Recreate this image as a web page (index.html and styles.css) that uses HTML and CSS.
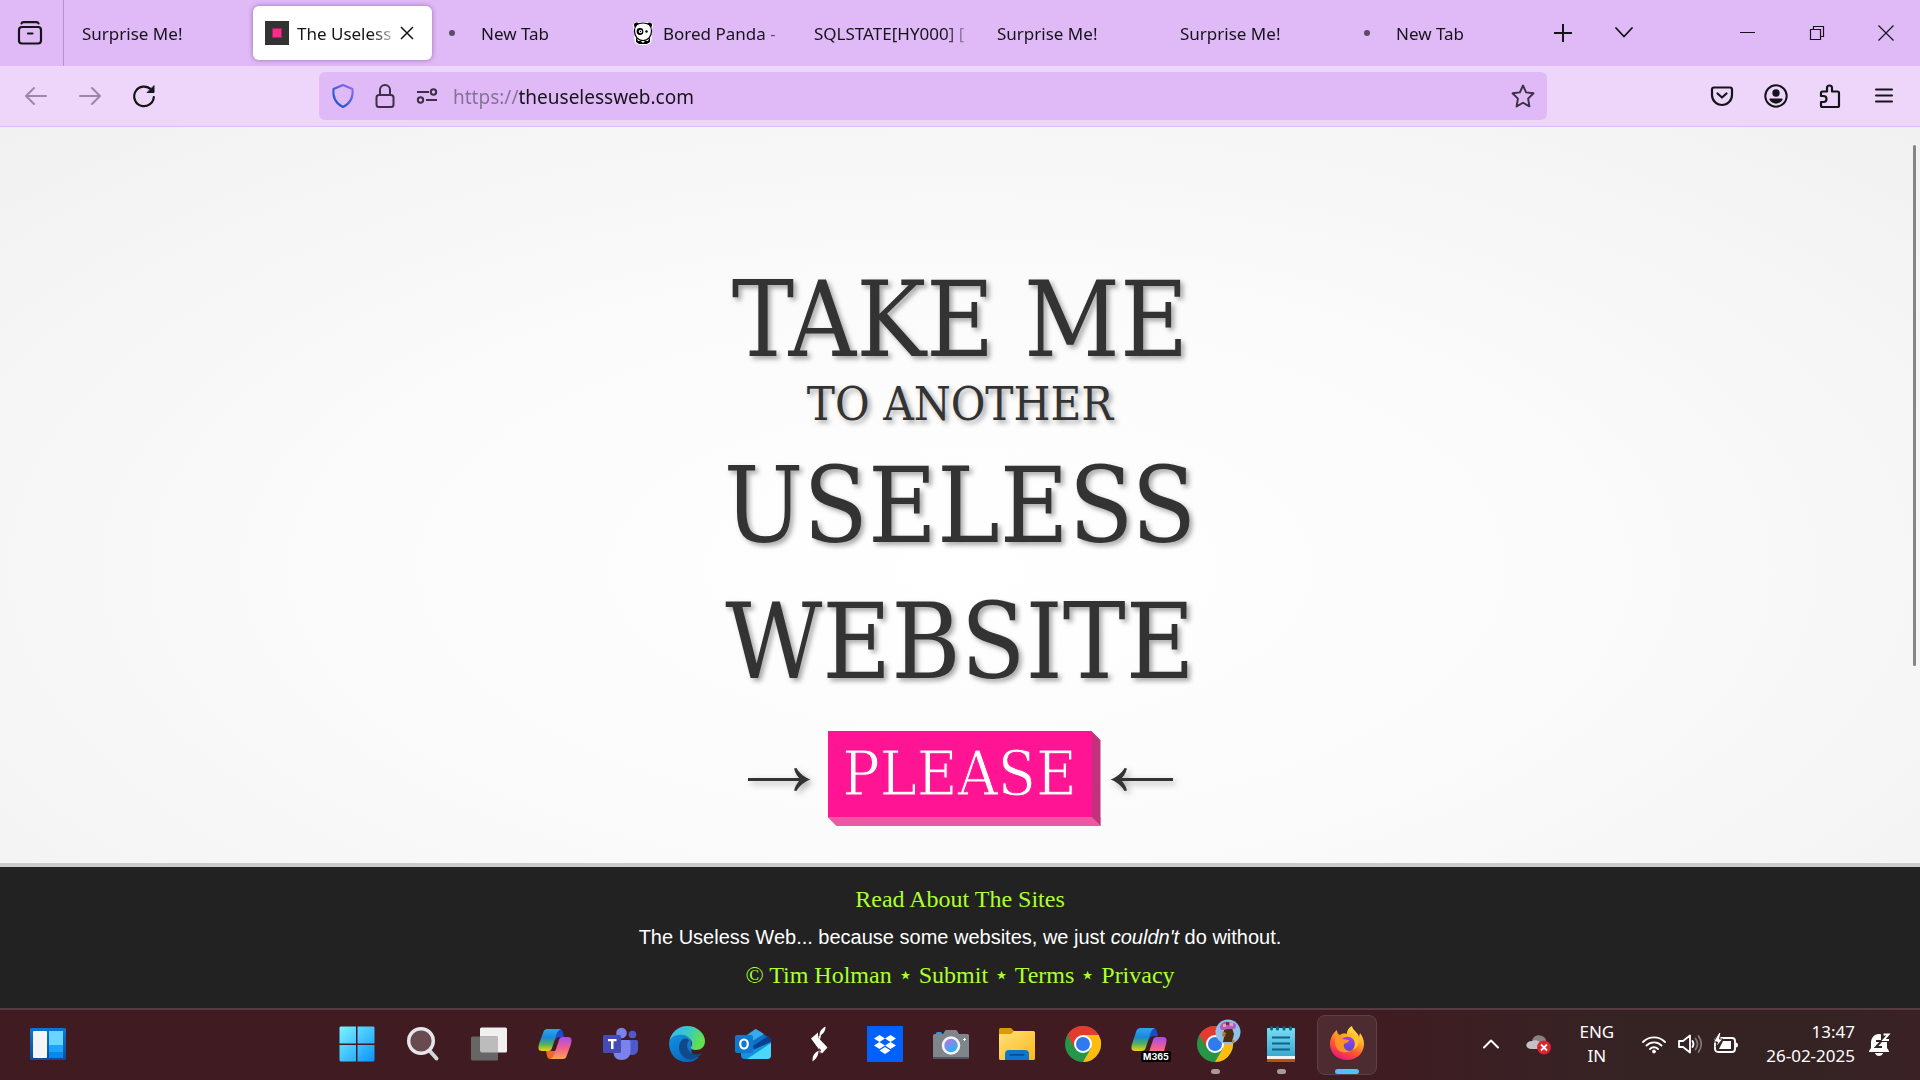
FILE: index.html
```html
<!DOCTYPE html>
<html lang="en">
<head>
<meta charset="utf-8">
<title>The Useless Web</title>
<link rel="stylesheet" href="styles.css">
</head>
<body>
<header class="browser">
  <div class="tabbar">
    <button class="view-btn" aria-label="Recent browsing"><svg width="26" height="26" viewBox="0 0 26 26" fill="none" stroke="#15141a" stroke-width="2.2" stroke-linecap="round"><path d="M4.500 3.500q.4-1.400 2-1.400h13q1.600 0 2 1.400"/><rect x="2" y="7" width="22" height="16.500" rx="3"/><path d="M11 13.500h4.500"/></svg></button>
    <div class="tabs">
      <button class="tab"><span class="tab-label">Surprise Me!</span></button>
      <button class="tab active"><svg class="favicon" width="24" height="24" viewBox="0 0 24 24"><path fill="#333" d="M0 0h24v24H0z"/><path fill="#ff2a8a" stroke="#a3225f" d="M7.500 7.500h9v9h-9z"/></svg><span class="tab-label">The Useless</span><svg class="tab-close" width="14" height="14" viewBox="0 0 14 14" stroke="#15141a" stroke-width="1.500"><path d="M1 1l12 12M13 1L1 13"/></svg></button>
      <button class="tab"><i class="pending"></i><span class="tab-label">New Tab</span></button>
      <button class="tab"><svg class="favicon" width="24" height="24" viewBox="0 0 24 24"><path fill="#fff" d="M4 1h16l2 3-1 5v7l-1 6-4 2H8l-4-2-1-6V9L2 4z"/><circle cx="5.500" cy="4" r="2.500"/><circle cx="18.500" cy="4" r="2.500"/><path d="M5 16l2 4h3l2 2 2-2h3l2-4v5l-3 2H8l-3-2z"/><path d="M12 2c6 0 8.500 3 8.500 8s-3 9.500-8.500 9.500S3.500 15 3.500 10 6 2 12 2z" fill="#fff" stroke="#000" stroke-width="1.200"/><circle cx="9" cy="10.500" r="3.400"/><circle cx="9.500" cy="10.500" r="1.700" fill="#fff"/><circle cx="9.500" cy="10.500" r=".7"/><circle cx="15.500" cy="10.500" r="1.200"/></svg><span class="tab-label">Bored Panda -</span></button>
      <button class="tab"><span class="tab-label">SQLSTATE[HY000] [</span></button>
      <button class="tab"><span class="tab-label">Surprise Me!</span></button>
      <button class="tab"><span class="tab-label">Surprise Me!</span></button>
      <button class="tab"><i class="pending"></i><span class="tab-label">New Tab</span></button>
    </div>
    <button class="bar-btn" aria-label="New tab"><svg width="20" height="20" viewBox="0 0 20 20" stroke="#15141a" stroke-width="2"><path d="M10 1v18M1 10h18"/></svg></button>
    <button class="bar-btn" aria-label="List all tabs"><svg width="20" height="20" viewBox="0 0 20 20" fill="none" stroke="#15141a" stroke-width="1.800" stroke-linecap="round"><path d="M2 5l8 8.500L18 5"/></svg></button>
    <div class="window-controls">
      <button class="win-btn" aria-label="Minimize"><svg width="16" height="16" viewBox="0 0 16 16"><path d="M0 7h15v1H0z" fill="#15141a"/></svg></button>
      <button class="win-btn" aria-label="Restore"><svg width="16" height="16" viewBox="0 0 16 16" fill="none" stroke="#15141a" stroke-width="1.200"><path d="M1.500 4.500h10v10h-10zM4.500 4V1.500h10v10H12"/></svg></button>
      <button class="win-btn" aria-label="Close"><svg width="16" height="16" viewBox="0 0 16 16" stroke="#15141a" stroke-width="1.200"><path d="M.5.5l15 15M15.500.5l-15 15"/></svg></button>
    </div>
  </div>
  <div class="toolbar">
    <div class="nav">
      <button class="nav-btn dim" aria-label="Back"><svg width="24" height="24" viewBox="0 0 24 24" fill="none" stroke="currentColor" stroke-width="2" stroke-linecap="round" stroke-linejoin="round"><path d="M22 12H2M10 4l-8 8 8 8"/></svg></button>
      <button class="nav-btn dim" aria-label="Forward"><svg width="24" height="24" viewBox="0 0 24 24" fill="none" stroke="currentColor" stroke-width="2" stroke-linecap="round" stroke-linejoin="round"><path d="M2 12h20M14 4l8 8-8 8"/></svg></button>
      <button class="nav-btn" aria-label="Reload"><svg width="24" height="24" viewBox="0 0 24 24" fill="none" stroke="currentColor" stroke-width="2.200" stroke-linecap="round"><path d="M19 5.500A9.800 9.800 0 1 0 21.800 13"/><path d="M22 2v6.500h-6.500z" fill="currentColor" stroke-width="1"/></svg></button>
    </div>
    <div class="urlbar">
      <svg width="24" height="24" viewBox="0 0 24 24" fill="none" stroke="url(#shield)" stroke-width="2" stroke-linejoin="round"><defs><linearGradient id="shield" x1="0" y1="1" x2="1" y2="0"><stop offset=".3" stop-color="#2b5bd0"/><stop offset="1" stop-color="#9a68f5"/></linearGradient></defs><path d="M12 1l9.500 4c1 8-2.500 14.500-9.500 18C5 19.500 1.500 13 2.500 5z"/></svg>
      <svg width="24" height="24" viewBox="0 0 24 24" fill="none" stroke="#3c2f47" stroke-width="2"><rect x="3.500" y="11" width="17" height="12" rx="2.500"/><path d="M7 11V6a5 5 0 0 1 10 0v5"/></svg>
      <svg width="24" height="24" viewBox="0 0 24 24" fill="none" stroke="#3c2f47" stroke-width="2"><path d="M2 8h12M11 16h11"/><circle cx="18.500" cy="8" r="2.700"/><circle cx="5.500" cy="16" r="2.700"/></svg>
      <input class="url" type="text" aria-label="Address" value="https://theuselessweb.com">
      <svg width="24" height="24" viewBox="0 0 24 24" fill="none" stroke="#3c2f47" stroke-width="1.900" stroke-linejoin="round"><path d="M12 1.500l3.100 6.900 7.400.9-5.400 5.300 1.300 7.800L12 18.700l-6.400 3.700 1.300-7.800L1.500 9.300l7.400-.9z"/></svg>
    </div>
    <div class="actions">
      <button class="nav-btn" aria-label="Save to Pocket"><svg width="24" height="24" viewBox="0 0 24 24" fill="none" stroke="currentColor" stroke-width="2.200" stroke-linecap="round" stroke-linejoin="round"><path d="M4 3.500h16q2 0 2 2V11a10 10 0 0 1-20 0V5.500q0-2 2-2zM7.500 9.500l4.500 4 4.500-4"/></svg></button>
      <button class="nav-btn" aria-label="Account"><svg width="24" height="24" viewBox="0 0 24 24" fill="currentColor"><circle cx="12" cy="12" r="10.700" fill="none" stroke="currentColor" stroke-width="2"/><circle cx="12" cy="9" r="3.700"/><path d="M6.500 14.500h11c1.500 0 1.300 1 .6 2a7.500 7.500 0 0 1-12.200 0c-.7-1-.9-2 .6-2z"/></svg></button>
      <button class="nav-btn" aria-label="Extensions"><svg width="24" height="24" viewBox="0 0 24 24" fill="none" stroke="currentColor" stroke-width="2.200" stroke-linejoin="round"><path d="M3 12V9q0-1.500 1.500-1.500H9V4a2.500 2.500 0 0 1 5 0v3.500h5.500Q21 7.500 21 9v12.500q0 1.500-1.500 1.500h-15Q3 23 3 21.500V18h2.500a3 3 0 0 0 0-6z"/></svg></button>
      <button class="nav-btn" aria-label="Menu"><svg width="24" height="24" viewBox="0 0 24 24" stroke="currentColor" stroke-width="2" stroke-linecap="round"><path d="M4 5.500h16M4 11.500h16M4 17.500h16"/></svg></button>
    </div>
  </div>
</header>

<main class="page">
  <h1 class="headline">
    <span class="line take">TAKE ME</span>
    <span class="line another">TO ANOTHER</span>
    <span class="line big">USELESS</span>
    <span class="line big">WEBSITE</span>
  </h1>
  <div class="cta">
    <svg class="arrow" width="64" height="24" viewBox="0 0 64 24" fill="#333"><path d="M1 11h53v3H1z"/><path d="M47 1.500L49.500 1C53 7 58 10.500 63.500 12.500 58 14.500 53 18 49.500 24L47 23.500C48.500 18 51 15 53.500 12.500 51 10 48.500 7 47 1.500z"/></svg>
    <button class="please">PLEASE</button>
    <svg class="arrow" width="64" height="24" viewBox="0 0 64 24" fill="#333"><path d="M10 11h53v3H10z"/><path d="M17 1.500L14.500 1C11 7 6 10.500.5 12.500 6 14.500 11 18 14.500 24L17 23.500C15.500 18 13 15 10.500 12.500 13 10 15.500 7 17 1.500z"/></svg>
  </div>
  <span class="scrollbar"></span>
</main>

<footer class="footer">
  <p class="links"><a href="#">Read About The Sites</a></p>
  <p>The Useless Web... because some websites, we just <em>couldn't</em> do without.</p>
  <p class="links">© <a href="#">Tim Holman</a> ⋆ <a href="#">Submit</a> ⋆ <a href="#">Terms</a> ⋆ <a href="#">Privacy</a></p>
</footer>

<nav class="taskbar">
  <div class="task-left">
    <button class="app" aria-label="Widgets"><svg width="36" height="36" viewBox="0 0 36 36"><defs><linearGradient id="wb" x2="0" y2="1"><stop stop-color="#0a78d2"/><stop offset="1" stop-color="#0c4d96"/></linearGradient></defs><rect y="2" width="36" height="32" rx="1.500" fill="url(#wb)"/><rect x="3" y="5" width="14" height="27" rx="1" fill="#f5f5f5"/><path fill="#66d6ff" d="M19 5h14v14H19z"/><path fill="#1ca5fb" d="M19 19h14v7H19z"/><path fill="#0688ef" d="M19 26h14v6H19z"/></svg></button>
  </div>
  <div class="apps">
    <button class="app" aria-label="Start"><svg width="36" height="36" viewBox="0 0 36 36"><defs><linearGradient id="win" x2="1" y2="1"><stop stop-color="#7cf4ff"/><stop offset="1" stop-color="#0a93ff"/></linearGradient></defs><path fill="url(#win)" d="M1.500.5H17v17H.5v-16zM18.500.5h16l1 1v16h-17zM.5 19H17v16.500H1.500l-1-1zM18.500 19h17v15.500l-1 1h-16z"/></svg></button>
    <button class="app" aria-label="Search"><svg width="36" height="36" viewBox="0 0 36 36" fill="none" stroke="#e6e6ea" stroke-linecap="round"><path d="M24 24l7.500 8.500" stroke-width="4" stroke="#d4d6de"/><circle cx="16" cy="15" r="12.300" fill="#6a4a51" stroke-width="3.400"/></svg></button>
    <button class="app" aria-label="Task view"><svg width="36" height="36" viewBox="0 0 36 36"><rect x="9" y="1.500" width="27" height="25" rx="1.500" fill="#f0f0f0"/><rect y="10.500" width="27" height="24" rx="1.500" fill="#666"/><path fill="#bcbcbc" d="M9 10.500h18v16H10.500L9 25z"/></svg></button>
    <button class="app" aria-label="Copilot"><svg width="36" height="36" viewBox="0 0 36 36"><defs><linearGradient id="cp1" x2="0" y2="1"><stop stop-color="#2aa8ee"/><stop offset=".4" stop-color="#1b87d6"/><stop offset=".7" stop-color="#52b35a"/><stop offset="1" stop-color="#f8d112"/></linearGradient><linearGradient id="cp2" x2="0" y2="1"><stop stop-color="#a44df0"/><stop offset=".5" stop-color="#f0608c"/><stop offset="1" stop-color="#ffa052"/></linearGradient></defs><path fill="#1c4bcb" d="M16 3h6c4 0 4 4 5 8h-4c-3 0-4 1-5 4z"/><path fill="#f4642e" d="M9 25h9l3-3-4 8c-1 2-2 3-4 3-3 0-3-4-4-8z"/><path fill="url(#cp1)" d="M10 3h14c-3 1-4 3-5 7l-4 12c-1 3-2 3-5 3H5c-4 0-4-3-3-7L6 7c1-3 2-4 4-4z"/><path fill="url(#cp2)" d="M26 33H13c3-1 4-4 5-7l4-12c1-3 2-3 5-3h4c4 0 4 3 3 7l-4 11c-1 3-2 4-4 4z"/></svg></button>
    <button class="app" aria-label="Teams"><svg width="36" height="36" viewBox="0 0 36 36"><circle cx="18.500" cy="7" r="5.300" fill="#7b83eb"/><circle cx="29.500" cy="8.500" r="3.800" fill="#5059c9"/><path fill="#5059c9" d="M24 14h9.500q1.500 0 1.500 1.500V23c0 4-3 6-6 6s-5-1-5-5z"/><path fill="#7b83eb" d="M11 14h15q1.500 0 1.500 1.500V25c0 6-4 9-9 9s-8-3-8-8z"/><rect y="9" width="18" height="18" rx="1.500" fill="#454bb5"/><path fill="#fff" d="M5 13h8.500v2.300h-3V23H8v-7.700H5z"/></svg></button>
    <button class="app" aria-label="Edge"><svg width="36" height="36" viewBox="0 0 36 36"><defs><linearGradient id="e1" x2="1" y2=".3"><stop stop-color="#37bdf0"/><stop offset=".5" stop-color="#35c6d0"/><stop offset="1" stop-color="#64e04e"/></linearGradient><linearGradient id="e2" x2=".6" y2="1"><stop stop-color="#1491df"/><stop offset="1" stop-color="#0a66c4"/></linearGradient></defs><path fill="url(#e2)" d="M0 17C2 8 12 7 17 10c5 2 6 6 5 11l1 8 7 2c-3 3-7 5-12 5C7 36 0 28 0 17z"/><path fill="#114a8b" d="M13 14c-5 5-4 15 5 19 6 2 12-2 15-6-5 3-12 1-14-4-2-4 0-7 1-8-1-3-5-3-7-1z"/><path fill="url(#e1)" d="M0 17C1 7 9 0 18 0c11 0 18 8 18 15 0 6-4 9-9 9-3 0-6-1-5-3 2-3 1-6-1-8C15 6 2 8 0 17z"/></svg></button>
    <button class="app" aria-label="Outlook"><svg width="36" height="36" viewBox="0 0 36 36"><path fill="#0e6fc6" d="M6 13L20 3l16 10v4L14 26z"/><path fill="#3aa9ea" d="M8 12L21 3l8 5L14 17z"/><path fill="#08408c" d="M18 20l15-10 3 3v4L20 26z"/><path fill="#1492e0" d="M6 19l12 5 18-8v13q0 4-4 4H10q-4 0-4-4z"/><path fill="#49d7fb" d="M36 17v12q0 4-4 4H12z"/><rect y="9" width="18" height="18" rx="2" fill="#0f78cf"/><ellipse cx="9" cy="18" rx="3.800" ry="4.500" fill="none" stroke="#fff" stroke-width="2.200"/></svg></button>
    <button class="app" aria-label="Spark"><svg width="36" height="36" viewBox="0 0 36 36" fill="#fff"><path d="M24.500.5c0 4-1 6-6 10 0-5 1-7 6-10zM17 6.500v5l9.500 10-5.500 6-11-15zM20 9.500l-1 4-2-3zM11.500 35.500c0-5 1-8 6-11 0 5-2 8-6 11zM19 28l1-4-2-2z"/></svg></button>
    <button class="app" aria-label="Dropbox"><svg width="36" height="36" viewBox="0 0 36 36"><path fill="#0061fe" d="M0 0h36v36H0z"/><path fill="#fff" d="M12.500 9l5.500 3.500-5.500 3.500L7 12.500zM23.500 9l5.500 3.500-5.500 3.500-5.500-3.500zM12.500 16l5.500 3.500-5.500 3.500L7 19.500zM23.500 16l5.500 3.500-5.500 3.500-5.500-3.500zM18 21l5.500 3.500L18 28l-5.500-3.500z"/></svg></button>
    <button class="app" aria-label="Camera"><svg width="36" height="36" viewBox="0 0 36 36"><defs><linearGradient id="cam" x2=".6" y2="1"><stop stop-color="#c06ee0"/><stop offset="1" stop-color="#28b4f0"/></linearGradient></defs><rect x="3" y="6" width="6" height="4" rx="1.500" fill="#1fa2e6"/><path fill="#80858b" d="M1.500 8H10l2.500-4h11L26 8h8.500Q36 8 36 9.500v22q0 1.500-1.500 1.500h-33Q0 33 0 31.500v-22Q0 8 1.500 8z"/><path fill="#50565d" d="M0 31h36v.5q0 1.500-1.500 1.500h-33Q0 33 0 31.500z"/><circle cx="18" cy="19.500" r="9.300" fill="#f4f4f6"/><circle cx="18" cy="19.500" r="6.700" fill="url(#cam)"/><path fill="#fff" d="M31 12h1v3h-1zM30 13h3v1h-3z"/></svg></button>
    <button class="app" aria-label="File Explorer"><svg width="36" height="36" viewBox="0 0 36 36"><defs><linearGradient id="fold" x2="1" y2="1"><stop stop-color="#ffe07a"/><stop offset="1" stop-color="#fbb81d"/></linearGradient></defs><path fill="#dc9a05" d="M0 12V3.500Q0 2 1.500 2H12l3 3v7z"/><path fill="url(#fold)" d="M0 8h12l3-3h19.500Q36 5 36 6.500v26q0 1.500-1.500 1.500h-33Q0 34 0 32.500z"/><path fill="#0b78cc" d="M6 34v-6q0-4 4-4h16q4 0 4 4v6z"/><path fill="#064a8c" d="M10.500 28h15v1.600h-15z"/></svg></button>
    <button class="app" aria-label="Chrome"><svg width="36" height="36" viewBox="0 0 36 36"><g id="chrome"><circle cx="18" cy="18" r="18" fill="#269547"/><path fill="#e43b30" d="M2.400 9A18 18 0 0 1 33.600 9H18l-8 13.500z"/><path fill="#fcbd10" d="M33.600 9A18 18 0 0 1 18 36l7.800-13.500L18 9z"/><circle cx="18" cy="18" r="9" fill="#fff"/><circle cx="18" cy="18" r="7" fill="#2f7bee"/></g></svg></button>
    <button class="app" aria-label="Microsoft 365"><svg width="36" height="36" viewBox="0 0 36 36"><path fill="#1c4bcb" d="M16 2h6c4 0 4 4 5 8h-4c-3 0-4 1-5 4z"/><path fill="url(#cp1)" d="M10 2h14c-3 1-4 3-5 7l-4 12c-1 3-2 4-5 4H4c-4 0-4-3-3-7L5 6c1-3 2-4 5-4z"/><path fill="url(#cp2)" d="M28 33H13c3-1 4-4 5-7l4-12c1-3 2-3 5-3h5c4 0 4 3 3 7l-3 11c-1 3-2 4-4 4z"/></svg><span class="tag">M365</span></button>
    <button class="app running" aria-label="Chrome, profile"><svg width="36" height="36" viewBox="0 0 36 36"><use href="#chrome"/></svg><svg class="avatar" width="26" height="26" viewBox="0 0 26 26"><circle cx="13" cy="13" r="12.500" fill="#8fc0e8"/><path fill="#4d2c12" d="M9 9h8l2 6-2 8H8l1-5z"/><path fill="#a9793a" d="M8 12l3 2-1 4-3-1zM17 20l3 2-3 2z"/><path fill="#b65bc4" d="M5 9c0-5 4-7 8-6s8 0 8 4-4 3-7 3-8 3-9-1z"/><path fill="#e8a0b8" d="M8 5h3v3H8zM15 4h3v3h-3z"/><path fill="#6b3a1e" d="M11 3h3v3h-3z"/></svg></button>
    <button class="app running" aria-label="Notepad"><svg width="36" height="36" viewBox="0 0 36 36"><defs><linearGradient id="np" x2="0" y2="1"><stop stop-color="#7bdcf3"/><stop offset="1" stop-color="#3aaad0"/></linearGradient></defs><path fill="#b0560c" d="M4 30h28v6H4z"/><path fill="#f2f2f2" d="M4 28h28v5H4z"/><path fill="url(#np)" d="M4 3q0-1 1-1h26q1 0 1 1v27H4z"/><path stroke="#0c6587" stroke-width="1.800" d="M9 11.500h18M9 17.500h18M9 23.500h18"/><path stroke="#0c6587" stroke-width="3" stroke-linecap="round" d="M8.500 1.500v1.500M14.500 1.500v1.500M21 1.500v1.500M27.500 1.500v1.500"/></svg></button>
    <button class="app current" aria-label="Firefox"><svg width="36" height="36" viewBox="0 0 36 36"><defs><linearGradient id="fx" x1=".8" y1="0" x2=".3" y2="1"><stop stop-color="#fff04a"/><stop offset=".35" stop-color="#ffb02a"/><stop offset=".65" stop-color="#ff5a2c"/><stop offset="1" stop-color="#e8157c"/></linearGradient><linearGradient id="fxb" x2="0" y2="1"><stop stop-color="#a63df0"/><stop offset="1" stop-color="#4f4ad0"/></linearGradient></defs><path fill="url(#fx)" d="M23 0c-5 3-5 6-5 8-3-1-6 0-7 1-3-1-3-4-3-5C3 8 1 13 1 18c0 9 7 16 17 16s17-7 17-16c0-5-2-8-4-11l-1 4c-1-5-6-6-7-11z"/><circle cx="18.500" cy="18" r="7.300" fill="url(#fxb)"/><path fill="#ff9226" d="M6 11c4-1 6 0 7 2l7 1c0 2-3 3-5 4-1 4 2 7 6 7-7 4-14-1-15-7z"/><path fill="#ffc52e" d="M22 9c4 3 6 9 2 15 6-3 7-10 4-14z"/></svg></button>
  </div>
  <div class="tray">
    <button class="tray-btn" aria-label="Hidden icons"><svg width="18" height="18" viewBox="0 0 18 18" fill="none" stroke="#fff" stroke-width="2" stroke-linecap="round" stroke-linejoin="round"><path d="M2 12.500l7-7 7 7"/></svg></button>
    <button class="tray-btn cloud" aria-label="OneDrive"><svg width="26" height="22" viewBox="0 0 26 22"><path fill="#898284" d="M6 8C7 3 12 1 16 3c3 1 4 3 4 5l-8 6z"/><path fill="#c6c2c3" d="M6 8c4-2 7 0 9 2l3 6H6c-8 0-7-8 0-8z"/><circle cx="18" cy="14.500" r="7" fill="#dc2430"/><path d="M15 11.500l6 6M21 11.500l-6 6" stroke="#fff" stroke-width="1.800"/></svg></button>
    <button class="lang">ENG<br>IN</button>
    <button class="status" aria-label="Network, volume, battery">
      <svg width="24" height="24" viewBox="0 0 24 24" fill="none" stroke="#fff" stroke-width="1.900" stroke-linecap="round"><path d="M1 10a15.500 15.500 0 0 1 22 0M4.500 13.500a10.600 10.600 0 0 1 15 0M8 17a5.600 5.600 0 0 1 8 0"/><circle cx="12" cy="19.500" r="1.500" fill="#fff" stroke-width="1"/></svg>
      <svg width="24" height="24" viewBox="0 0 24 24" fill="none" stroke="#fff" stroke-width="1.800" stroke-linecap="round" stroke-linejoin="round"><path d="M1 9h4l7-5.500v17L5 15H1zM14.500 9q2 3 0 6"/><path d="M17.500 6.500q4 5.500 0 11M20.500 4q5.500 8 0 16" stroke="#7e7475"/></svg>
      <svg width="24" height="24" viewBox="0 0 24 24"><rect x="1" y="6" width="20" height="14" rx="3" fill="none" stroke="#fff" stroke-width="1.900"/><path fill="#fff" d="M22 10.500q2 0 2 2.500t-2 2.500zM9 9h8v8H5z"/><path fill="#fff" stroke="#352324" d="M5 .5L-.5 10h4L2 15l7-8H5.500L7 .5z"/></svg>
    </button>
    <button class="clock">13:47<br>26-02-2025</button>
    <button class="tray-btn" aria-label="Notifications"><svg width="24" height="26" viewBox="0 0 24 26"><path fill="#fff" d="M3 12c0-5 3-9 8-9s8 4 8 9v5l2 3v1H1v-1l2-3zM7 22h8c-1 4-7 4-8 0z"/><path d="M8 10h5.500L8 16h6" fill="none" stroke="#352324" stroke-width="2"/><path fill="#352324" d="M13 1h10v10H13z"/><path d="M15.500 3.500h5l-5 5.500h5.500" fill="none" stroke="#fff" stroke-width="1.900"/></svg></button>
  </div>
</nav>
</body>
</html>
```
FILE: styles.css
```css
* { box-sizing: border-box; }
body {
  margin: 0;
  min-height: 100vh;
  display: flex;
  flex-direction: column;
  font-family: "Noto Sans", sans-serif;
  color: #15141a;
}
button {
  font: inherit;
  color: inherit;
  background: none;
  border: 0;
  padding: 0;
}
svg { display: block; flex: none; overflow: visible; }
p, h1 { margin: 0; font-weight: normal; }

/* Browser chrome */
.browser { border-bottom: 1px solid #e0baf6; }
.tabbar {
  display: flex;
  align-items: center;
  height: 66px;
  background: #e0baf6;
}
.view-btn {
  display: flex;
  align-items: center;
  justify-content: center;
  width: 64px;
  height: 66px;
  padding-right: 4px;
  border-right: 1px solid #b593c9;
}
.tabs {
  display: grid;
  grid-template-columns: repeat(8, minmax(0, 1fr));
  flex: 0 1 1468px;
  min-width: 0;
  padding-left: 4px;
}
.tab {
  display: flex;
  align-items: center;
  min-width: 0;
  height: 54px;
  margin: 0 2px;
  padding: 0 0 0 12px;
  border-radius: 6px;
  font-size: 17px;
  text-align: left;
}
.tab.active {
  background: #fff;
  box-shadow: 0 0 5px rgba(80, 40, 110, 0.5);
  padding-right: 18px;
}
.tab-label {
  flex: 1;
  min-width: 0;
  overflow: hidden;
  white-space: nowrap;
  margin-right: 8px;
  mask-image: linear-gradient(to left, transparent, #000 28px);
}
.active .tab-label { margin-right: 0; }
.favicon { margin-right: 8px; }
.pending {
  width: 6px;
  height: 6px;
  margin: 0 26px 0 1px;
  border-radius: 50%;
  background: #5c4a68;
}
.bar-btn, .win-btn {
  display: flex;
  align-items: center;
  justify-content: center;
  width: 61px;
  height: 54px;
}
.window-controls { display: flex; margin-left: auto; }
.win-btn { width: 69px; height: 66px; }
.toolbar {
  display: flex;
  align-items: center;
  height: 60px;
  padding: 0 9px;
  background: #edd6f9;
}
.nav, .actions { display: flex; }
.actions { margin-left: auto; }
.nav-btn {
  display: flex;
  align-items: center;
  justify-content: center;
  width: 54px;
  height: 48px;
}
.nav-btn.dim { color: #9a88a6; }
.urlbar {
  display: flex;
  align-items: center;
  gap: 18px;
  flex: 0 1 1228px;
  height: 48px;
  margin-left: 148px;
  padding: 0 12px;
  border-radius: 6px;
  background: #e0baf6;
}
.url {
  flex: 1;
  min-width: 0;
  height: 40px;
  margin-left: -4px;
  padding: 2px 0 0;
  border: 0;
  outline: 0;
  font: 19px "Noto Sans", sans-serif;
  color: transparent;
  background: linear-gradient(to right, #85709a 66px, #15141a 66px);
  background-clip: text;
}

/* Page */
.page {
  position: relative;
  flex: 1;
  display: flex;
  flex-direction: column;
  align-items: center;
  padding: 143px 0 37px;
  background: radial-gradient(ellipse at 50% 60%, #fff 0%, #fbfbfb 45%, #f1f1f1 100%);
  border-bottom: 4px solid #ccc;
}
.headline {
  font-family: "DejaVu Serif Condensed", "DejaVu Serif", serif;
  color: #333;
  text-align: center;
  text-shadow: 3px 3px 5px rgba(0, 0, 0, 0.35);
}
.line { display: block; white-space: nowrap; }
.take { font-size: 104px; line-height: 100px; }
.another { font-size: 47px; line-height: 68px; }
.big { font-size: 105px; line-height: 136px; }
.cta {
  display: flex;
  align-items: center;
  margin-top: 21px;
}
.arrow { filter: drop-shadow(3px 3px 3px rgba(0, 0, 0, 0.3)); }
.please {
  width: 273px;
  height: 95px;
  margin: 0 9px 0 17px;
  border: 0 solid;
  border-color: transparent #c1327a #ee57a2 transparent;
  border-width: 0 9px 9px 0;
  background: #ff1493;
  background-clip: padding-box;
  clip-path: polygon(0 0, calc(100% - 9px) 0, 100% 9px, 100% 100%, 9px 100%, 0 calc(100% - 9px));
  color: #fff;
  font: 62px/82px "DejaVu Serif Condensed", "DejaVu Serif", serif;
  -webkit-text-stroke: 1px #ff1493;
}
.scrollbar {
  position: absolute;
  top: 18px;
  right: 4px;
  width: 3px;
  height: 521px;
  border-radius: 2px;
  background: #858585;
}
.footer {
  padding: 13px 0 14px;
  background: #222;
  color: #fff;
  text-align: center;
  font: 20px/38px "Liberation Sans", Arial, sans-serif;
}
.links { font: 24px/38px "Liberation Serif", serif; color: #adff2f; }
.links a { color: inherit; text-decoration: none; }

/* Taskbar */
.taskbar {
  display: grid;
  grid-template-columns: 3fr auto 5fr;
  align-items: center;
  height: 72px;
  border-top: 2px solid #563c42;
  background: linear-gradient(to right, #401b22 70%, #352324 85%, #352324 95%, #3a2125);
  color: #fff;
}
.task-left { padding-left: 15px; }
.apps { display: flex; }
.app {
  position: relative;
  display: flex;
  align-items: center;
  justify-content: center;
  width: 66px;
  height: 60px;
  padding-bottom: 2px;
}
.app.current::before {
  content: "";
  position: absolute;
  inset: 0 3px;
  border: 1px solid #5c4248;
  border-radius: 8px;
  background: rgba(255, 255, 255, 0.07);
}
.current svg { position: relative; }
.running::after, .current::after {
  content: "";
  position: absolute;
  bottom: 1px;
  width: 9px;
  height: 5px;
  border-radius: 3px;
  background: #a8999d;
}
.current::after { width: 24px; background: #4cc2ff; }
.tag {
  position: absolute;
  left: 25px;
  top: 36px;
  padding: 0 2px;
  border-radius: 2px;
  background: #000;
  font: bold 9px/11px Inter, sans-serif;
}
.avatar { position: absolute; right: 7px; top: 4px; }
.tray {
  display: flex;
  align-items: center;
  justify-content: flex-end;
  padding: 0 28px 2px 0;
  font-size: 17px;
  line-height: 24px;
  white-space: nowrap;
}
.tray-btn { flex: none; }
.cloud { margin-left: 26px; }
.lang { margin-left: 28px; text-align: center; }
.status { display: flex; gap: 12px; margin: 0 28px; }
.clock { margin-right: 13px; text-align: right; }
```
